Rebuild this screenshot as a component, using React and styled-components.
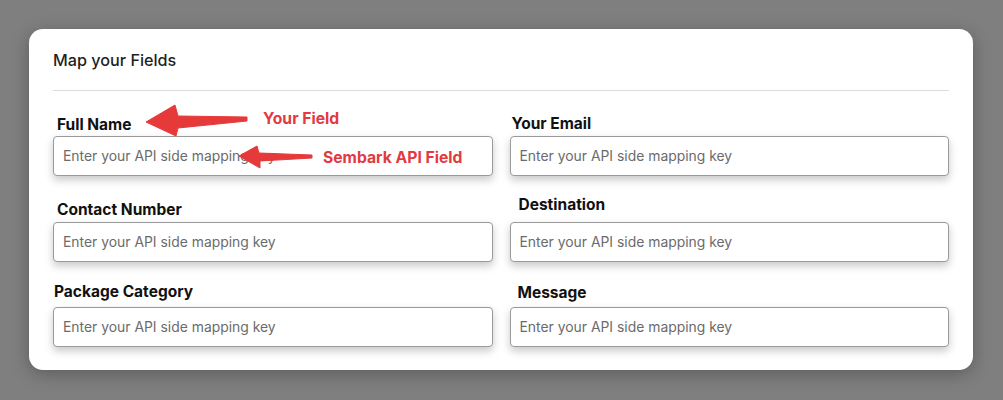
import React from 'react';
import styled, { createGlobalStyle } from 'styled-components';

const GlobalStyle = createGlobalStyle`
  html, body {
    margin: 0;
    padding: 0;
    background: #7f7f7f;
  }
  body {
    font-family: Inter, "Liberation Sans", Arial, sans-serif;
    -webkit-font-smoothing: antialiased;
  }
`;

const Page = styled.div`
  width: 1003px;
  height: 400px;
  padding: 29px 30px 0 29px;
  box-sizing: border-box;
`;

const Card = styled.section`
  position: relative;
  background: #fff;
  border-radius: 14px;
  box-shadow: 0 4px 18px rgba(0, 0, 0, 0.28);
  padding: 21px 24px 23px;
`;

const Title = styled.h2`
  margin: 0;
  font-size: 16.2px;
  line-height: 20px;
  font-weight: 500;
  color: #1f1f1f;
`;

const Divider = styled.hr`
  margin: 20px 0 0;
  border: 0;
  border-top: 1px solid #dcdcdc;
`;

const Grid = styled.div`
  display: grid;
  grid-template-columns: 1fr 1fr;
  column-gap: 17px;
  row-gap: 23px;
  margin-top: 23px;
`;

const Field = styled.label`
  display: flex;
  flex-direction: column;
`;

const Label = styled.span`
  font-size: 15.5px;
  line-height: 20px;
  font-weight: 700;
  color: #111;
  padding-left: ${({ $indent }) => $indent}px;
  margin-top: ${({ $shift }) => $shift}px;
  margin-bottom: ${({ $gap }) => $gap}px;
`;

const Input = styled.input`
  box-sizing: border-box;
  height: 40px;
  width: 100%;
  border: 1px solid #9a9a9a;
  border-radius: 4px;
  padding: 0 9px;
  font-family: inherit;
  font-size: 13.9px;
  color: #333;
  background: #fff;
  box-shadow: 0 4px 8px rgba(0, 0, 0, 0.22);
  outline: none;

  &::placeholder {
    color: #6b6b6b;
  }
`;

const Note = styled.div`
  position: absolute;
  left: ${({ $x }) => $x}px;
  top: ${({ $y }) => $y}px;
  display: flex;
  align-items: center;
  gap: ${({ $gap }) => $gap}px;
  pointer-events: none;
`;

const NoteText = styled.span`
  color: #e23a3f;
  font-size: 15.7px;
  font-weight: 700;
  white-space: nowrap;
  margin-bottom: ${({ $lift }) => $lift}px;
`;

const fields = [
  { label: 'Full Name', indent: 4, shift: 1, gap: 1 },
  { label: 'Your Email', indent: 2, shift: 0, gap: 2 },
  { label: 'Contact Number', indent: 4, shift: 1, gap: 2 },
  { label: 'Destination', indent: 9, shift: -4, gap: 7 },
  { label: 'Package Category', indent: 1, shift: -3, gap: 5 },
  { label: 'Message', indent: 8, shift: -2, gap: 4 },
];

const App = () => (
  <>
    <GlobalStyle />
    <Page>
      <Card>
        <Title>Map your Fields</Title>
        <Divider />
        <Grid>
          {fields.map((f) => (
            <Field key={f.label}>
              <Label $indent={f.indent} $shift={f.shift} $gap={f.gap}>
                {f.label}
              </Label>
              <Input placeholder="Enter your API side mapping key" />
            </Field>
          ))}
        </Grid>

        <Note $x={116} $y={75} $gap={14}>
          <svg width="104" height="34" viewBox="0 0 104 34">
            <polygon
              points="1,18 30,1 33,12 102,13 102,17 33,24 31,32"
              fill="#e63a3a"
              stroke="#e63a3a"
              strokeWidth="1"
              strokeLinejoin="round"
            />
          </svg>
          <NoteText $lift={6}>Your Field</NoteText>
        </Note>

        <Note $x={209} $y={116} $gap={9}>
          <svg width="76" height="25" viewBox="0 0 76 25">
            <polygon
              points="1,11 19,1 21,8 74,10 74,13 22,16 22,23"
              fill="#e63a3a"
              stroke="#e63a3a"
              strokeWidth="1"
              strokeLinejoin="round"
            />
          </svg>
          <NoteText $lift={0}>Sembark API Field</NoteText>
        </Note>
      </Card>
    </Page>
  </>
);

export default App;
